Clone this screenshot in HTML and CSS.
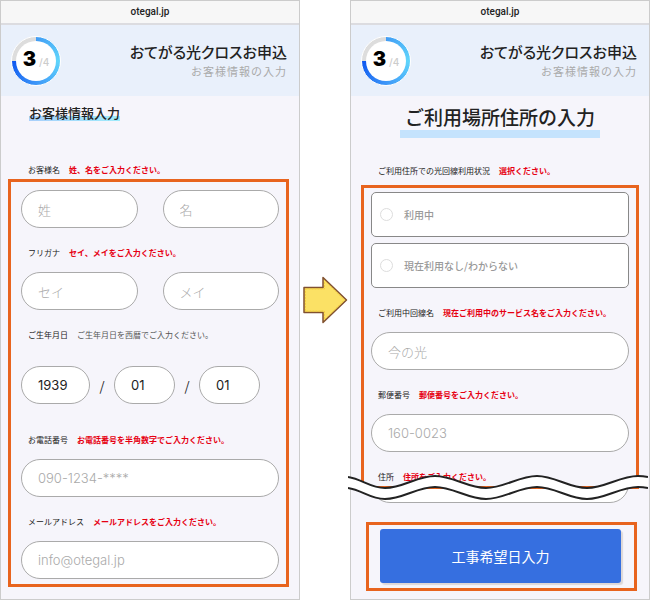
FILE: index.html
```html
<!DOCTYPE html>
<html lang="ja">

<head>
    <meta charset="UTF-8">
    <meta name="viewport" content="width=device-width, initial-scale=1.0">
    <title>おてがる光クロスお申込</title>
    <link rel="stylesheet" href="styles.css">
</head>

<body>
    <main class="steps">
        <section class="phone">
            <div class="url_bar">otegal.jp</div>
            <header class="head">
                <div class="progress"><p class="count"><b>3</b><span>/4</span></p></div>
                <div class="head_text">
                    <h1>おてがる光クロスお申込</h1>
                    <p>お客様情報の入力</p>
                </div>
            </header>
            <form class="form customer">
                <h2 class="title_small">お客様情報入力</h2>
                <div class="label_row first">
                    <label for="s_name">お客様名</label>
                    <span class="error">姓、名をご入力ください。</span>
                </div>
                <div class="frame">
                    <div class="two">
                        <input type="text" id="s_name" name="s_name" placeholder="姓">
                        <input type="text" id="name" name="name" placeholder="名" aria-label="名">
                    </div>
                    <div class="label_row">
                        <label for="s_kana">フリガナ</label>
                        <span class="error">セイ、メイをご入力ください。</span>
                    </div>
                    <div class="two">
                        <input type="text" id="s_kana" name="s_kana" placeholder="セイ">
                        <input type="text" id="kana" name="kana" placeholder="メイ" aria-label="メイ">
                    </div>
                    <div class="label_row">
                        <label for="year">ご生年月日</label>
                        <span class="note">ご生年月日を西暦でご入力ください。</span>
                    </div>
                    <div class="birth">
                        <select id="year" name="year" class="year">
                            <option>1939</option>
                        </select>
                        <span>/</span>
                        <select name="month" aria-label="月">
                            <option>01</option>
                        </select>
                        <span>/</span>
                        <select name="day" aria-label="日">
                            <option>01</option>
                        </select>
                    </div>
                    <div class="label_row">
                        <label for="tele">お電話番号</label>
                        <span class="error">お電話番号を半角数字でご入力ください。</span>
                    </div>
                    <input type="tel" id="tele" name="tele" class="latin" placeholder="090-1234-****">
                    <div class="label_row">
                        <label for="mail">メールアドレス</label>
                        <span class="error">メールアドレスをご入力ください。</span>
                    </div>
                    <input type="email" id="mail" name="mail" class="latin" placeholder="info@otegal.jp">
                </div>
            </form>
        </section>

        <div class="arrow">
            <svg width="46" height="48" viewBox="0 0 46 48" aria-hidden="true">
                <path d="M2 11.500H21V1.500L44.500 24L21 46.500V36.500H2Z" fill="#fbe165" stroke="#80502f" stroke-width="1.500" stroke-linejoin="round"/>
                <path d="M3.500 13H22.500V4.500L42.500 24L22.500 43.500V35H3.500Z" fill="none" stroke="#f5cf3d" stroke-width="1" stroke-dasharray="2 1"/>
            </svg>
        </div>

        <section class="phone">
            <div class="url_bar">otegal.jp</div>
            <header class="head">
                <div class="progress"><p class="count"><b>3</b><span>/4</span></p></div>
                <div class="head_text">
                    <h1>おてがる光クロスお申込</h1>
                    <p>お客様情報の入力</p>
                </div>
            </header>
            <form class="form place">
                <h2 class="title_big">ご利用場所住所の入力</h2>
                <div class="label_row first">
                    <span id="status">ご利用住所での光回線利用状況</span>
                    <span class="error">選択ください。</span>
                </div>
                <div class="frame">
                    <div class="choices" role="radiogroup" aria-labelledby="status">
                        <label class="choice"><input type="radio" name="line">利用中</label>
                        <label class="choice"><input type="radio" name="line">現在利用なし/わからない</label>
                    </div>
                    <div class="label_row">
                        <label for="service">ご利用中回線名</label>
                        <span class="error">現在ご利用中のサービス名をご入力ください。</span>
                    </div>
                    <input type="text" id="service" name="service" placeholder="今の光">
                    <div class="label_row">
                        <label for="zip">郵便番号</label>
                        <span class="error">郵便番号をご入力ください。</span>
                    </div>
                    <input type="text" id="zip" name="zip" class="latin" placeholder="160-0023">
                    <div class="label_row">
                        <label for="address">住所</label>
                        <span class="error">住所をご入力ください。</span>
                    </div>
                    <svg class="wave" viewBox="0 0 300 28" preserveAspectRatio="none" aria-hidden="true">
                        <path d="M0 3C14 5 22 14 37 14C55 14 69 2 87 2S120 14 138 14S171 2 189 2S221 14 239 14S272 2 290 2Q295 2 300 3V14Q295 13 290 13C272 13 257 25 239 25S207 13 189 13S156 25 138 25S105 13 87 13S55 25 37 25C22 25 14 16 0 14Z" fill="#fff"/>
                        <path d="M0 3C14 5 22 14 37 14C55 14 69 2 87 2S120 14 138 14S171 2 189 2S221 14 239 14S272 2 290 2Q295 2 300 3M300 14Q295 13 290 13C272 13 257 25 239 25S207 13 189 13S156 25 138 25S105 13 87 13S55 25 37 25C22 25 14 16 0 14" fill="none" stroke="#222" stroke-width="2"/>
                    </svg>
                </div>
                <div class="cut">
                    <input type="text" id="address" name="address">
                </div>
                <div class="submit_frame">
                    <button type="submit">工事希望日入力</button>
                </div>
            </form>
        </section>
    </main>
</body>

</html>
```

FILE: styles.css
```css
* {
    box-sizing: border-box;
}

body {
    margin: 0;
    background: #fff;
    color: #222;
    font-family: "Noto Sans CJK JP", sans-serif;
}

h1,
h2,
p {
    margin: 0;
}

.steps {
    display: grid;
    grid-template-columns: 1fr 50px 1fr;
    min-height: 100vh;
}

.phone {
    background: #f6f5fb;
    border: 1px solid #ccc;
}

.url_bar {
    height: 24px;
    background: #f7f7f7;
    border-bottom: 2px solid #dcdce0;
    font: 500 10px/22px Roboto, sans-serif;
    text-align: center;
}

/* header */
.head {
    display: flex;
    align-items: center;
    justify-content: space-between;
    height: 71px;
    padding: 0 12px 0 10px;
    background: #e9f0fb;
}

.progress {
    width: 50px;
    height: 50px;
    padding: 4px;
    border: 1px solid #fff;
    border-radius: 50%;
    background: conic-gradient(#419cf5, #60d5fb 90deg, #3c96f8 180deg, #1058f0 270deg, #ddd 270deg);
}

.count {
    display: flex;
    align-items: baseline;
    justify-content: center;
    gap: 3px;
    height: 100%;
    border-radius: 50%;
    background: #fff;
    font-family: Inter, sans-serif;
    line-height: 36px;
}

.count b {
    color: #000;
    font-size: 20px;
    font-weight: 900;
}

.count span {
    color: #ccc;
    font-size: 10px;
    font-weight: 500;
}

.head_text {
    text-align: right;
}

.head h1 {
    font-size: 15px;
    font-weight: 500;
    line-height: 20px;
    font-feature-settings: "palt";
}

.head_text p {
    color: #aaa;
    font-size: 11px;
    letter-spacing: 1px;
    line-height: 18px;
}

/* form */
.form {
    display: flex;
    flex-direction: column;
}

.title_small {
    align-self: flex-start;
    margin: 8px 0 0 28px;
    background: linear-gradient(90deg, #a9cffb, #9eebfb) bottom / 100% 5px no-repeat;
    font-size: 13px;
    font-weight: 500;
    line-height: 17px;
}

.title_big {
    align-self: center;
    margin-top: 8px;
    padding: 0 5px;
    border-bottom: 8px solid #c5e3fd;
    font-size: 19px;
    font-weight: 500;
    line-height: 26px;
}

.label_row {
    display: flex;
    gap: 9px;
    height: 16px;
    margin: 17px 0 11px 7px;
    font-size: 8px;
    line-height: 16px;
    white-space: nowrap;
}

.customer .first {
    margin: 41px 0 1px 27px;
}

.place .first {
    margin: 25px 0 6px 27px;
}

.error {
    color: #e60012;
    font-weight: 700;
}

.note {
    color: #555;
}

.frame {
    position: relative;
    border: 3px solid #e8641e;
}

.customer .frame {
    margin: 0 10px 0 7px;
    padding: 8px 7px 5px 10px;
}

.place .frame {
    margin: 0 10px;
    padding: 4px 7px 1px;
}

.place .frame .label_row:last-of-type {
    margin-bottom: 0;
}

input,
select {
    display: block;
    width: 100%;
    height: 38px;
    padding: 0 16px;
    border: 1px solid #aaa;
    border-radius: 19px;
    background: #fff;
    color: #222;
    font-family: "Noto Sans CJK JP", sans-serif;
    font-size: 13px;
}

input::placeholder {
    color: #aaa;
    font-weight: 300;
    opacity: 1;
}

.latin {
    font-family: Inter, sans-serif;
}

.two {
    display: grid;
    grid-template-columns: 1fr 1fr;
    gap: 25px;
}

.birth {
    display: flex;
    align-items: center;
    margin: 23px 0 28px;
    font-size: 13px;
}

.birth span {
    width: 24px;
    text-align: center;
}

.birth select {
    width: 61px;
    appearance: none;
    font-family: Inter, sans-serif;
}

.birth .year {
    width: 69px;
}

.choices {
    display: grid;
    gap: 6px;
}

.choice {
    display: flex;
    align-items: center;
    gap: 11px;
    height: 45px;
    padding: 0 8px;
    border: 1px solid #888;
    border-radius: 5px;
    background: #fff;
    color: #999;
    font-size: 10px;
    font-weight: 500;
}

.choice input {
    appearance: none;
    width: 13px;
    height: 13px;
    margin: 0;
    padding: 0;
    border: 1px solid #ddd;
    border-radius: 50%;
}

/* torn part of the page */
.wave {
    position: absolute;
    left: -16px;
    bottom: -16px;
    width: calc(100% + 28px);
    height: 28px;
}

.cut {
    display: flex;
    align-items: flex-end;
    height: 14px;
    margin: 0 20px;
    overflow: hidden;
}

.cut input {
    flex-shrink: 0;
}

.submit_frame {
    margin: 19px 12px 0 15px;
    padding: 4px 13px 5px 11px;
    border: 3px solid #e8641e;
}

button {
    display: block;
    width: 100%;
    height: 54px;
    border: 0;
    border-radius: 3px;
    background: #366fe0;
    box-shadow: 2px 2px 1px #ddd8d8;
    color: #fff;
    font-family: "Noto Sans CJK JP", sans-serif;
    font-size: 14px;
}

.arrow {
    display: flex;
    align-items: center;
    justify-content: center;
}
```
